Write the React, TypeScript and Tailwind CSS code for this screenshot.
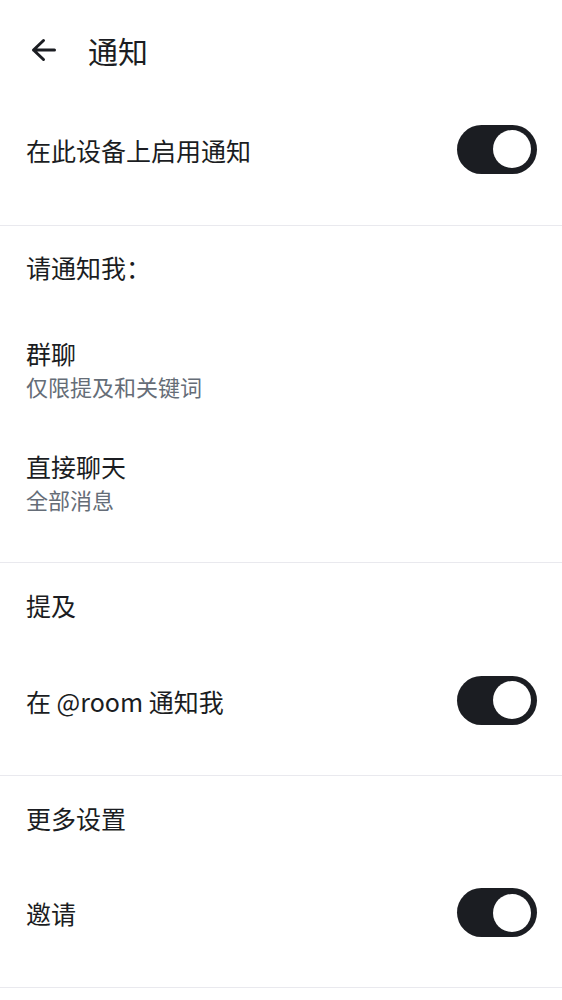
import React from "react";

const font = { fontFamily: '"Noto Sans CJK SC", Roboto, sans-serif' };

function Toggle() {
  return (
    <div className="flex h-[49px] w-[80px] items-center justify-end rounded-full bg-[#1b1d22] pr-[6px]">
      <div className="h-[38px] w-[38px] rounded-full bg-white" />
    </div>
  );
}

function Divider() {
  return <div className="h-px w-full bg-[#e9e9ee]" />;
}

function ToggleRow({ label, h }: { label: string; h: string }) {
  return (
    <div className={`flex items-center justify-between pl-[26px] pr-[25px] ${h}`}>
      <span className="pt-[2px] text-[25px] leading-none text-[#1b1d22]">{label}</span>
      <Toggle />
    </div>
  );
}

function Header({ label, h }: { label: string; h: string }) {
  return (
    <div className={`flex items-center pb-[5px] pl-[26px] ${h}`}>
      <span className="text-[25px] leading-none text-[#1b1d22]">{label}</span>
    </div>
  );
}

function Item({ title, sub }: { title: string; sub: string }) {
  return (
    <div className="flex h-[113px] flex-col justify-center pb-[4px] pl-[26px]">
      <span className="text-[25px] leading-[34px] text-[#1b1d22]">{title}</span>
      <span className="text-[22px] leading-[32px] text-[#656d77]">{sub}</span>
    </div>
  );
}

export default function App() {
  return (
    <div className="min-h-[1000px] w-[562px] bg-white" style={font}>
      <div className="flex h-[99px] items-center">
        <div className="ml-[31px] flex h-[24px] w-[26px] items-center">
          <svg width="26" height="24" viewBox="0 0 26 24" fill="none">
            <path
              d="M2.5 12H23.5M12.5 2.5L2.5 12L12.5 21.5"
              stroke="#1b1d22"
              strokeWidth="3"
              strokeLinecap="round"
              strokeLinejoin="round"
            />
          </svg>
        </div>
        <span className="ml-[31px] pt-[1px] text-[30px] leading-none text-[#1b1d22]">通知</span>
      </div>

      <ToggleRow label="在此设备上启用通知" h="h-[100px]" />
      <div className="h-[26px]" />
      <Divider />

      <Header label="请通知我：" h="h-[88px]" />
      <Item title="群聊" sub="仅限提及和关键词" />
      <Item title="直接聊天" sub="全部消息" />
      <div className="h-[22px]" />
      <Divider />

      <Header label="提及" h="h-[89px]" />
      <ToggleRow label="在 @room 通知我" h="h-[96px]" />
      <div className="h-[27px]" />
      <Divider />

      <Header label="更多设置" h="h-[89px]" />
      <ToggleRow label="邀请" h="h-[95px]" />
      <div className="h-[27px]" />
      <Divider />
    </div>
  );
}
